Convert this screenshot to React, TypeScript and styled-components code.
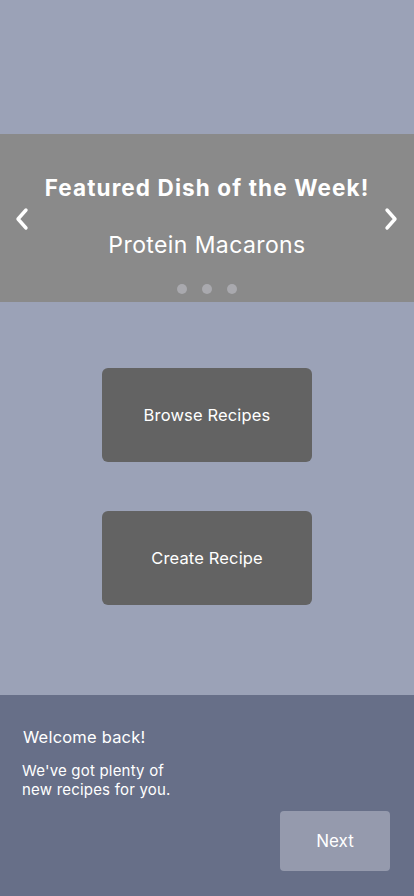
import React, { useState } from "react";
import styled, { createGlobalStyle } from "styled-components";

const Global = createGlobalStyle`
  html, body { margin: 0; padding: 0; }
  body { background: #9ba2b7; font-family: Inter, "Noto Sans", sans-serif; -webkit-font-smoothing: antialiased; }
  * { box-sizing: border-box; }
`;

const Page = styled.div`
  width: 414px;
  height: 896px;
  display: flex;
  flex-direction: column;
  background: #9ba2b7;
  overflow: hidden;
`;

const TopSpace = styled.div`
  height: 134px;
  flex: none;
`;

const Carousel = styled.section`
  position: relative;
  height: 168px;
  flex: none;
  background: #8a8a8a;
  display: flex;
  flex-direction: column;
  align-items: center;
  color: #fff;
`;

const Title = styled.h2`
  margin: 41px 0 0;
  font-size: 22.5px;
  font-weight: 700;
  line-height: 26px;
  letter-spacing: 1.1px;
  white-space: nowrap;
`;

const Subtitle = styled.p`
  margin: 30px 0 0;
  font-size: 23px;
  font-weight: 400;
  line-height: 28px;
  letter-spacing: 0.4px;
`;

const Dots = styled.div`
  display: flex;
  gap: 15px;
  margin-top: 25px;
`;

const Dot = styled.span<{ $active?: boolean }>`
  width: 10px;
  height: 10px;
  border-radius: 50%;
  background: #a9a9ae;
`;

const Arrow = styled.button<{ $side: "left" | "right" }>`
  position: absolute;
  top: 72px;
  ${(p) => (p.$side === "left" ? "left: 12px;" : "right: 13px;")}
  width: 20px;
  height: 26px;
  padding: 0;
  border: none;
  background: transparent;
  display: flex;
  align-items: center;
  justify-content: center;
  cursor: pointer;
`;

const Actions = styled.main`
  flex: 1;
  display: flex;
  flex-direction: column;
  align-items: center;
  padding-top: 66px;
  gap: 49px;
`;

const ActionButton = styled.button`
  width: 210px;
  height: 94px;
  border: none;
  border-radius: 6px;
  background: #636363;
  color: #fff;
  font-family: Inter, "Noto Sans", sans-serif;
  font-size: 16.5px;
  font-weight: 400;
  letter-spacing: 0.15px;
  cursor: pointer;
`;

const Panel = styled.footer`
  height: 201px;
  flex: none;
  background: #676f88;
  color: #fff;
  display: flex;
  flex-direction: column;
  padding: 32px 24px 0 22px;
`;

const Welcome = styled.p`
  margin: 0 0 0 1px;
  font-size: 16.5px;
  line-height: 20px;
  letter-spacing: 0.2px;
`;

const Message = styled.p`
  margin: 14px 0 0;
  font-size: 15px;
  line-height: 19px;
  letter-spacing: 0.2px;
  width: 165px;
`;

const NextRow = styled.div`
  display: flex;
  justify-content: flex-end;
  margin-top: 12px;
`;

const NextButton = styled.button`
  width: 110px;
  height: 60px;
  border: none;
  border-radius: 4px;
  background: #959aad;
  color: #fff;
  font-family: Inter, "Noto Sans", sans-serif;
  font-size: 17px;
  cursor: pointer;
`;

const Chevron = ({ dir }: { dir: "left" | "right" }) => (
  <svg width="16" height="24" viewBox="0 0 16 24" fill="none">
    <path
      d={dir === "left" ? "M12 3 L4 12 L12 21" : "M4 3 L12 12 L4 21"}
      stroke="#fff"
      strokeWidth="3.4"
      strokeLinecap="round"
      strokeLinejoin="round"
    />
  </svg>
);

export default function App() {
  const [index] = useState(0);
  return (
    <>
      <Global />
      <Page>
        <TopSpace />
        <Carousel>
          <Arrow $side="left" aria-label="Previous">
            <Chevron dir="left" />
          </Arrow>
          <Title>Featured Dish of the Week!</Title>
          <Subtitle>Protein Macarons</Subtitle>
          <Dots>
            {[0, 1, 2].map((i) => (
              <Dot key={i} $active={i === index} />
            ))}
          </Dots>
          <Arrow $side="right" aria-label="Next">
            <Chevron dir="right" />
          </Arrow>
        </Carousel>
        <Actions>
          <ActionButton>Browse Recipes</ActionButton>
          <ActionButton>Create Recipe</ActionButton>
        </Actions>
        <Panel>
          <Welcome>Welcome back!</Welcome>
          <Message>We've got plenty of new recipes for you.</Message>
          <NextRow>
            <NextButton>Next</NextButton>
          </NextRow>
        </Panel>
      </Page>
    </>
  );
}
